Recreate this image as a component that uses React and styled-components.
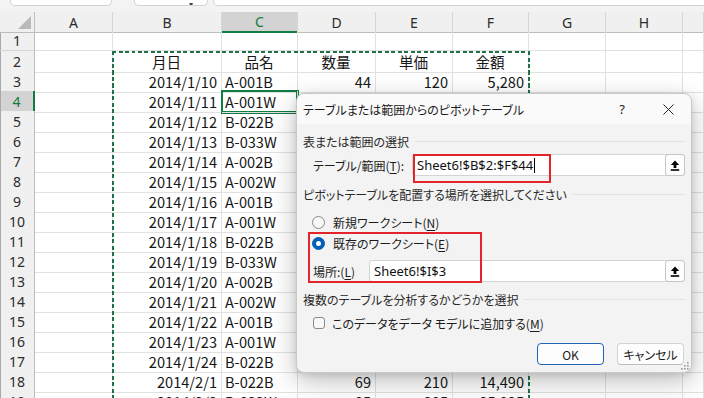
import React from 'react'
import styled, { createGlobalStyle } from 'styled-components'

const GlobalStyle = createGlobalStyle`
  html, body { margin: 0; padding: 0; background: #fff; }
  body { font-family: "Noto Sans CJK JP", "Noto Sans", sans-serif; }
`

const TEMPLATE = '35px 78px 109px 76px 78px 77px 76px 77px 77px 1fr'
const GREEN = '#107c41'

const Page = styled.div`
  position: relative;
  width: 704px;
  height: 398px;
  overflow: hidden;
  background: #fff;
`

const Toolbar = styled.div`
  height: 12px;
  display: flex;
  align-items: flex-start;
  background: #f3f3f3;
`
const ToolBox = styled.div`
  position: relative;
  height: 5px;
  margin-left: ${p => p.$gap}px;
  width: ${p => (p.$w ? p.$w + 'px' : 'auto')};
  flex: ${p => (p.$w ? 'none' : 1)};
  margin-right: ${p => (p.$w ? 0 : -10)}px;
  background: #fff;
  border: 1px solid #d2d2d2;
  border-top: none;
  border-radius: 0 0 5px 5px;
`
const Caret = styled.span`
  position: absolute;
  right: 14px;
  bottom: 0px;
  font-size: 8px;
  line-height: 4px;
  height: 3px;
  overflow: hidden;
  color: #444;
`

const HeadRow = styled.div`
  display: grid;
  grid-template-columns: ${TEMPLATE};
  height: 19px;
`
const ColHead = styled.div`
  display: flex;
  align-items: center;
  justify-content: center;
  box-sizing: border-box;
  background: ${p => (p.$active ? '#d3d3d3' : '#f0f0f0')};
  color: ${p => (p.$active ? GREEN : '#2b2b2b')};
  border-right: 1px solid #d6d6d6;
  border-bottom: ${p => (p.$active ? `2px solid ${GREEN}` : '1px solid #bdbdbd')};
  font: 14px "Noto Sans", sans-serif;
`
const Corner = styled(ColHead)`
  position: relative;
  border-right: 1px solid #bdbdbd;
  &::after {
    content: '';
    position: absolute;
    right: 3px;
    bottom: 3px;
    width: 13px;
    height: 13px;
    background: #b9b9b9;
    clip-path: polygon(100% 0, 100% 100%, 0 100%);
  }
`

const Row = styled.div`
  display: grid;
  grid-template-columns: ${TEMPLATE};
  height: 20px;
`
const RowHead = styled.div`
  display: flex;
  align-items: center;
  justify-content: center;
  box-sizing: border-box;
  background: ${p => (p.$active ? '#d3d3d3' : '#f0f0f0')};
  color: ${p => (p.$active ? GREEN : '#2b2b2b')};
  border-right: ${p => (p.$active ? `2px solid ${GREEN}` : '1px solid #bdbdbd')};
  border-bottom: 1px solid #d6d6d6;
  box-shadow: inset 1px 0 0 #a9a9a9;
  font: 14px "Noto Sans", sans-serif;
`
const Cell = styled.div`
  display: flex;
  align-items: center;
  justify-content: ${p => (p.$align === 'right' ? 'flex-end' : p.$align === 'center' ? 'center' : 'flex-start')};
  box-sizing: border-box;
  padding: 0 4px 0 3px;
  border-right: 1px solid #e1e1e1;
  border-bottom: 1px solid #e1e1e1;
  font-size: 14.6px;
  color: #161616;
  white-space: nowrap;
  box-shadow: ${p => (p.$selected ? `0 0 0 1px ${GREEN}, inset 0 0 0 1px ${GREEN}` : 'none')};
  position: ${p => (p.$selected ? 'relative' : 'static')};
  z-index: ${p => (p.$selected ? 1 : 'auto')};
`

const Marquee = styled.div`
  position: absolute;
  left: 112px;
  top: 51px;
  width: 418px;
  height: 400px;
  pointer-events: none;
  z-index: 2;
  background:
    repeating-linear-gradient(90deg, #1d7345 0 4px, transparent 4px 6.5px) left top / 100% 2px no-repeat,
    repeating-linear-gradient(180deg, #1d7345 0 4px, transparent 4px 6.5px) left top / 2px 100% no-repeat,
    repeating-linear-gradient(180deg, #1d7345 0 4px, transparent 4px 6.5px) right top / 2px 100% no-repeat;
`

/* dialog */
const Dialog = styled.div`
  position: absolute;
  left: 296px;
  top: 93px;
  z-index: 5;
  width: 396px;
  height: 280px;
  box-sizing: border-box;
  display: flex;
  flex-direction: column;
  border: 1px solid #c9c9c9;
  border-radius: 8px;
  background: #f3f3f3;
  box-shadow: 0 8px 26px rgba(0, 0, 0, 0.26), 0 2px 6px rgba(0, 0, 0, 0.1);
  font-family: "Noto Sans CJK JP", "Noto Sans", sans-serif;
  font-feature-settings: "palt";
  font-size: 12px;
  color: #1b1b1b;
`
const TitleBar = styled.div`
  height: 30px;
  display: flex;
  align-items: center;
  padding-left: 6px;
  background: #fafafa;
  border-radius: 8px 8px 0 0;
`
const Title = styled.div`
  flex: 1;
`
const CapButton = styled.div`
  width: 46px;
  height: 30px;
  display: flex;
  align-items: center;
  justify-content: center;
  font: 13px "Noto Sans", sans-serif;
  color: #222;
`
const Body = styled.div`
  flex: 1;
  display: flex;
  flex-direction: column;
  padding: 9px 6px 0 6px;
`
const Section = styled.div`
  height: 16px;
  display: flex;
  align-items: center;
  margin-top: ${p => p.$mt || 0}px;
  color: #2a2a2a;
  &::after {
    content: '';
    flex: 1;
    height: 1px;
    margin-left: 6px;
    background: #e2e2e2;
  }
`
const Field = styled.div`
  display: flex;
  align-items: center;
  height: 22px;
  margin-top: ${p => p.$mt}px;
  padding-left: 10px;
`
const Label = styled.div`
  width: ${p => p.$w}px;
  flex: none;
`
const Input = styled.div`
  flex: 1;
  height: 22px;
  box-sizing: border-box;
  display: flex;
  align-items: center;
  background: #fff;
  border: 1px solid #d4d4d4;
  border-radius: 3px;
  padding-left: 4px;
  font: 13px "Noto Sans", sans-serif;
  color: #111;
`
const InputText = styled.span`
  flex: 1;
  display: flex;
  align-items: center;
`
const TextCaret = styled.span`
  width: 1px;
  height: 15px;
  margin-left: 1px;
  background: #000;
`
const PickButton = styled.div`
  width: 20px;
  height: 22px;
  box-sizing: border-box;
  margin: -1px -1px -1px 0;
  display: flex;
  align-items: center;
  justify-content: center;
  background: #fdfdfd;
  border: 1px solid #c6c6c6;
  border-radius: 3px;
`
const Choice = styled.div`
  display: flex;
  align-items: center;
  height: 16px;
  gap: 8px;
  margin-top: ${p => p.$mt}px;
  padding-left: 9px;
`
const Radio = styled.span`
  width: 13px;
  height: 13px;
  box-sizing: border-box;
  border-radius: 50%;
  flex: none;
  background: ${p => (p.$on ? '#005fb8' : '#f8f8f8')};
  border: 1px solid ${p => (p.$on ? '#005fb8' : '#8a8a8a')};
  display: flex;
  align-items: center;
  justify-content: center;
  &::after {
    content: '';
    width: 5px;
    height: 5px;
    border-radius: 50%;
    background: #fff;
    display: ${p => (p.$on ? 'block' : 'none')};
  }
`
const Check = styled.span`
  width: 12px;
  height: 12px;
  box-sizing: border-box;
  flex: none;
  border: 1px solid #8a8a8a;
  border-radius: 3px;
  background: #f8f8f8;
`
const CheckRow = styled(Choice)`
  padding-left: 10px;
  gap: 7px;
`
const Buttons = styled.div`
  display: flex;
  justify-content: flex-end;
  gap: 13px;
  margin-top: 12px;
  padding-right: 1px;
`
const Button = styled.div`
  width: 67px;
  height: 22px;
  box-sizing: border-box;
  display: flex;
  align-items: center;
  justify-content: center;
  background: #fdfdfd;
  border: 1px solid ${p => (p.$primary ? '#1f64b8' : '#d3d3d3')};
  border-bottom-color: ${p => (p.$primary ? '#1f64b8' : '#bdbdbd')};
  border-radius: 4px;
  color: #1b1b1b;
`
const Mark = styled.div`
  position: absolute;
  left: ${p => p.$x}px;
  top: ${p => p.$y}px;
  width: ${p => p.$w}px;
  height: ${p => p.$h}px;
  box-sizing: border-box;
  border: 2px solid #e3242b;
  pointer-events: none;
`
const Grip = styled.svg`
  position: absolute;
  right: 2px;
  bottom: 2px;
`

const U = styled.span`
  text-decoration: underline;
  text-underline-offset: 2px;
`

const UpIcon = () => (
  <svg width="10" height="11" viewBox="0 0 10 11">
    <path d="M5 0.5 L9.2 5 H6.4 V8 H3.6 V5 H0.8 Z" fill="#000" />
    <rect x="0.8" y="9.2" width="8.4" height="1.6" fill="#000" />
  </svg>
)

const CloseIcon = () => (
  <svg width="11" height="11" viewBox="0 0 11 11">
    <path d="M0.5 0.5 L10.5 10.5 M10.5 0.5 L0.5 10.5" stroke="#222" strokeWidth="1" />
  </svg>
)

const COLUMNS = ['A', 'B', 'C', 'D', 'E', 'F', 'G', 'H', '']

// rows 4-17: D..F sit under the dialog, so they stay empty here
const codes = ['A-001B', 'A-001W', 'B-022B', 'B-033W', 'A-002B', 'A-002W']
const rows = [
  { n: 1 },
  { n: 2, head: true },
]
for (let i = 0; i < 15; i++) {
  rows.push(i === 0
    ? { n: 3, date: '2014/1/10', code: 'A-001B', qty: '44', price: '120', amount: '5,280' }
    : { n: 3 + i, date: `2014/1/${10 + i}`, code: codes[i % 6] })
}
rows.push({ n: 18, date: '2014/2/1', code: 'B-022B', qty: '69', price: '210', amount: '14,490' })
rows.push({ n: 19, date: '2014/2/2', code: 'B-033W', qty: '85', price: '305', amount: '25,925' })

const Sheet = () => (
  <>
    <HeadRow>
      <Corner />
      {COLUMNS.map((c, i) => (
        <ColHead key={i} $active={c === 'C'}>{c}</ColHead>
      ))}
    </HeadRow>
    {rows.map(r => (
      <Row key={r.n}>
        <RowHead $active={r.n === 4}>{r.n}</RowHead>
        <Cell />
        {r.head ? (
          <>
            <Cell $align="center">月日</Cell>
            <Cell $align="center">品名</Cell>
            <Cell $align="center">数量</Cell>
            <Cell $align="center">単価</Cell>
            <Cell $align="center">金額</Cell>
          </>
        ) : (
          <>
            <Cell $align="right">{r.date}</Cell>
            <Cell $selected={r.n === 4}>{r.code}</Cell>
            <Cell $align="right">{r.qty}</Cell>
            <Cell $align="right">{r.price}</Cell>
            <Cell $align="right">{r.amount}</Cell>
          </>
        )}
        <Cell />
        <Cell />
        <Cell />
      </Row>
    ))}
  </>
)

const PivotDialog = () => (
  <Dialog>
    <TitleBar>
      <Title>テーブルまたは範囲からのピボットテーブル</Title>
      <CapButton>?</CapButton>
      <CapButton><CloseIcon /></CapButton>
    </TitleBar>
    <Body>
      <Section>表または範囲の選択</Section>
      <Field $mt={5}>
        <Label $w={99}>テーブル/範囲(<U>T</U>):</Label>
        <Input>
          <InputText>Sheet6!$B$2:$F$44<TextCaret /></InputText>
          <PickButton><UpIcon /></PickButton>
        </Input>
      </Field>
      <Section $mt={10}>ピボットテーブルを配置する場所を選択してください</Section>
      <Choice $mt={12}>
        <Radio />
        <span>新規ワークシート(<U>N</U>)</span>
      </Choice>
      <Choice $mt={5}>
        <Radio $on />
        <span>既存のワークシート(<U>E</U>)</span>
      </Choice>
      <Field $mt={9}>
        <Label $w={56}>場所:(<U>L</U>)</Label>
        <Input>
          <InputText>Sheet6!$I$3</InputText>
          <PickButton><UpIcon /></PickButton>
        </Input>
      </Field>
      <Section $mt={9}>複数のテーブルを分析するかどうかを選択</Section>
      <CheckRow $mt={8}>
        <Check />
        <span>このデータをデータ モデルに追加する(<U>M</U>)</span>
      </CheckRow>
      <Buttons>
        <Button $primary>OK</Button>
        <Button>キャンセル</Button>
      </Buttons>
    </Body>
    <Mark $x={116} $y={60} $w={138} $h={29} />
    <Mark $x={11} $y={138} $w={174} $h={51} />
    <Grip width="9" height="9" viewBox="0 0 9 9">
      <g fill="#9a9a9a">
        <rect x="7" y="1" width="1.6" height="1.6" />
        <rect x="4" y="4" width="1.6" height="1.6" />
        <rect x="7" y="4" width="1.6" height="1.6" />
        <rect x="1" y="7" width="1.6" height="1.6" />
        <rect x="4" y="7" width="1.6" height="1.6" />
        <rect x="7" y="7" width="1.6" height="1.6" />
      </g>
    </Grip>
  </Dialog>
)

export default function App() {
  return (
    <Page>
      <GlobalStyle />
      <Toolbar>
        <ToolBox $gap={10} $w={100} />
        <ToolBox $gap={22} $w={72}><Caret>▾</Caret></ToolBox>
        <ToolBox $gap={5} />
      </Toolbar>
      <Sheet />
      <Marquee />
      <PivotDialog />
    </Page>
  )
}
